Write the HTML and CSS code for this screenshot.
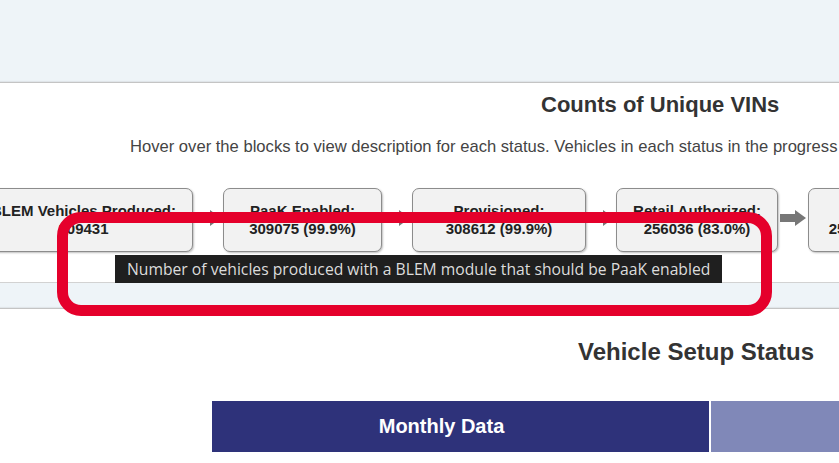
FILE: index.html
```html
<!DOCTYPE html>
<html lang="en">
<head>
<meta charset="utf-8">
<title>Counts of Unique VINs</title>
<link rel="stylesheet" href="styles.css">
</head>
<body>
  <div class="top-band"></div>

  <section class="card card-counts">
    <h2 class="counts-title">Counts of Unique VINs</h2>
    <p class="counts-hint">Hover over the blocks to view description for each status. Vehicles in each status in the progress bar are counted in the previous statuses as well.</p>

    <div class="flow">
      <div class="step step-1">
        <span>BLEM Vehicles Produced:</span>
        <span>309431</span>
      </div>
      <div class="arrow-slot">
        <svg class="arrow" width="26" height="16" viewBox="0 0 26 16"><rect x="0" y="4" width="16" height="8" fill="#777"/><polygon points="15,0 26,8 15,16" fill="#777"/></svg>
      </div>
      <div class="step step-2">
        <span>PaaK Enabled:</span>
        <span>309075 (99.9%)</span>
      </div>
      <div class="arrow-slot">
        <svg class="arrow" width="26" height="16" viewBox="0 0 26 16"><rect x="0" y="4" width="16" height="8" fill="#777"/><polygon points="15,0 26,8 15,16" fill="#777"/></svg>
      </div>
      <div class="step step-3">
        <span>Provisioned:</span>
        <span>308612 (99.9%)</span>
      </div>
      <div class="arrow-slot">
        <svg class="arrow" width="26" height="16" viewBox="0 0 26 16"><rect x="0" y="4" width="16" height="8" fill="#777"/><polygon points="15,0 26,8 15,16" fill="#777"/></svg>
      </div>
      <div class="step step-4">
        <span>Retail Authorized:</span>
        <span>256036 (83.0%)</span>
      </div>
      <div class="arrow-slot">
        <svg class="arrow" width="26" height="16" viewBox="0 0 26 16"><rect x="0" y="4" width="16" height="8" fill="#777"/><polygon points="15,0 26,8 15,16" fill="#777"/></svg>
      </div>
      <div class="step step-5">
        <span>Activated:</span>
        <span>250418 (81.1%)</span>
      </div>
    </div>
  </section>

  <section class="card card-setup">
    <h2 class="setup-title">Vehicle Setup Status</h2>
    <div class="tabs">
      <div class="tab tab-active">Monthly Data</div>
      <div class="tab tab-inactive">Cumulative Data</div>
    </div>
  </section>

  <div class="tooltip">Number of vehicles produced with a BLEM module that should be PaaK enabled</div>
  <div class="highlight"></div>
</body>
</html>
```

FILE: styles.css
```css
html, body {
  margin: 0;
  padding: 0;
}

body {
  width: 839px;
  height: 463px;
  overflow: hidden;
  position: relative;
  background: #eef4f8;
  font-family: "Liberation Sans", Arial, sans-serif;
  color: #333;
}

.top-band {
  height: 82px;
}

.card {
  background: #fff;
  border-top: 1px solid #c4c4c4;
  box-shadow: 0 -1px 1px rgba(0, 0, 0, 0.06);
  overflow: hidden;
}

.card-counts {
  height: 199px;
  border-bottom: 1px solid #d2d2d2;
}

.counts-title {
  margin: 0;
  padding: 9px 0 0 541px;
  font-size: 22px;
  line-height: 25px;
  font-weight: bold;
  color: #333;
  white-space: nowrap;
}

.counts-hint {
  margin: 20px 0 0;
  padding-left: 130px;
  font-size: 16.6px;
  line-height: 19px;
  color: #444;
  white-space: nowrap;
}

.flow {
  display: flex;
  align-items: center;
  margin: 32px 0 0 -26px;
}

.step {
  box-sizing: border-box;
  flex: none;
  height: 64px;
  display: flex;
  flex-direction: column;
  justify-content: center;
  align-items: center;
  background: #f2f2f2;
  border: 1px solid #8c8c8c;
  border-radius: 7px;
  box-shadow: 1px 1px 2px rgba(0, 0, 0, 0.25);
  font-size: 15px;
  line-height: 18px;
  font-weight: bold;
  color: #222;
  white-space: nowrap;
}

.step-1 { width: 219px; }
.step-2 { width: 159px; }
.step-3 { width: 174px; }
.step-4 { width: 162px; }
.step-5 { width: 148px; }

.arrow-slot {
  flex: none;
  width: 30px;
  display: flex;
  justify-content: center;
}

.arrow {
  display: block;
  margin-bottom: 5px;
}

.card-setup {
  margin-top: 25px;
  height: 154px;
}

.setup-title {
  margin: 0;
  padding: 29px 0 0 578px;
  font-size: 24px;
  line-height: 28px;
  font-weight: bold;
  color: #333;
  white-space: nowrap;
}

.tabs {
  display: flex;
  gap: 2px;
  margin: 35px 0 0 212px;
}

.tab {
  box-sizing: border-box;
  flex: none;
  width: 497px;
  height: 51px;
  display: flex;
  align-items: center;
  justify-content: center;
  font-size: 20px;
  font-weight: bold;
  color: #fff;
}

.tab-active {
  background: #2e327a;
  padding-right: 38px;
}

.tab-inactive {
  background: #8088b8;
}

.tooltip {
  position: absolute;
  left: 115px;
  top: 255px;
  width: 607px;
  height: 28px;
  box-sizing: border-box;
  padding-left: 12px;
  background: #1f1f1f;
  color: #dcdcdc;
  font-family: "Open Sans", "Noto Sans", sans-serif;
  font-size: 15.7px;
  line-height: 28px;
  white-space: nowrap;
  overflow: hidden;
}

.highlight {
  position: absolute;
  left: 57px;
  top: 212px;
  width: 715px;
  height: 104px;
  box-sizing: border-box;
  border: 11px solid #e5002b;
  border-radius: 24px;
}
```
